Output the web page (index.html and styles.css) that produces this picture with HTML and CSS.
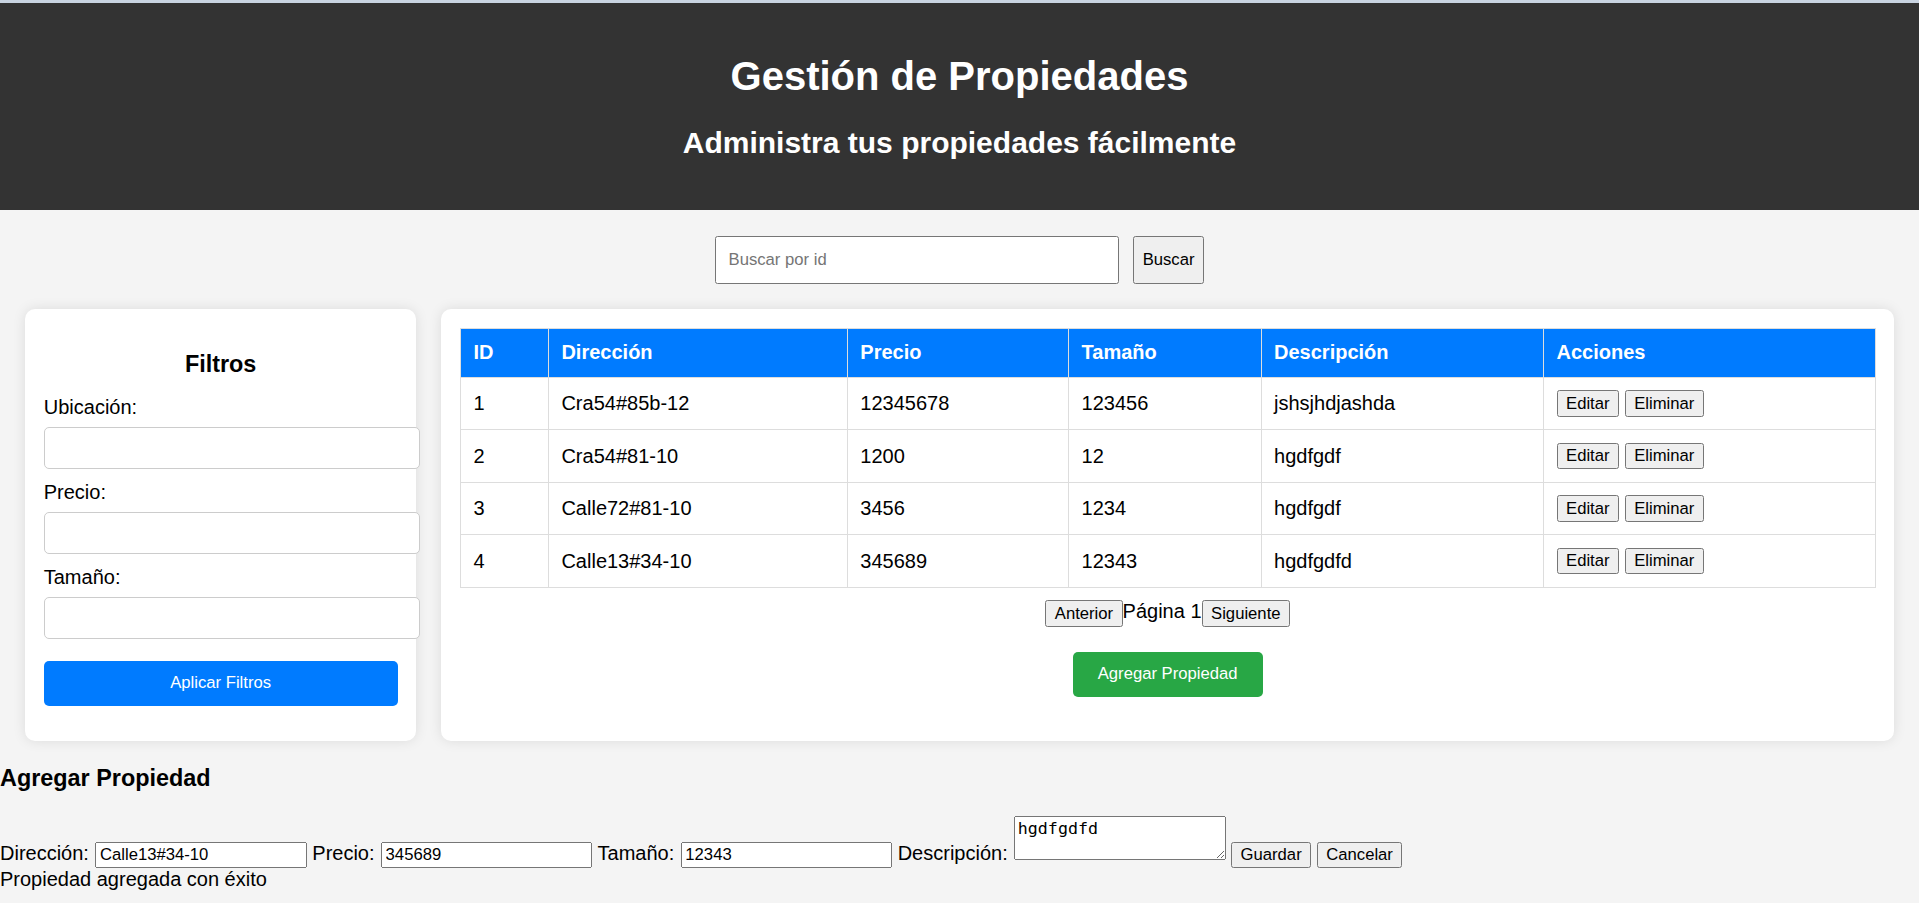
FILE: index.html
```
<!DOCTYPE html>
<html lang="es">
<head>
<meta charset="utf-8">
<title>Gestión de Propiedades</title>
<link rel="stylesheet" href="styles.css">
</head>
<body>
<div class="topbar"></div>
<header class="site-header">
  <h1 class="title">Gestión de Propiedades</h1>
  <h2 class="subtitle">Administra tus propiedades fácilmente</h2>
</header>
<div class="search">
  <input class="search-input" type="text" placeholder="Buscar por id">
  <button class="search-btn">Buscar</button>
</div>
<div class="layout">
  <aside class="card filters">
    <h3 class="filters-title">Filtros</h3>
    <label class="f-label">Ubicación:</label>
    <input class="f-input" type="text">
    <label class="f-label">Precio:</label>
    <input class="f-input" type="text">
    <label class="f-label">Tamaño:</label>
    <input class="f-input" type="text">
    <button class="apply-btn">Aplicar Filtros</button>
  </aside>
  <main class="card content">
    <table class="props">
      <colgroup>
        <col class="c-id"><col class="c-dir"><col class="c-precio"><col class="c-tam"><col class="c-desc"><col class="c-acc">
      </colgroup>
      <thead>
        <tr><th>ID</th><th>Dirección</th><th>Precio</th><th>Tamaño</th><th>Descripción</th><th>Acciones</th></tr>
      </thead>
      <tbody>
        <tr><td>1</td><td>Cra54#85b-12</td><td>12345678</td><td>123456</td><td>jshsjhdjashda</td><td><button class="row-btn">Editar</button> <button class="row-btn">Eliminar</button></td></tr>
        <tr><td>2</td><td>Cra54#81-10</td><td>1200</td><td>12</td><td>hgdfgdf</td><td><button class="row-btn">Editar</button> <button class="row-btn">Eliminar</button></td></tr>
        <tr><td>3</td><td>Calle72#81-10</td><td>3456</td><td>1234</td><td>hgdfgdf</td><td><button class="row-btn">Editar</button> <button class="row-btn">Eliminar</button></td></tr>
        <tr><td>4</td><td>Calle13#34-10</td><td>345689</td><td>12343</td><td>hgdfgdfd</td><td><button class="row-btn">Editar</button> <button class="row-btn">Eliminar</button></td></tr>
      </tbody>
    </table>
    <div class="pagination"><button class="pg-btn">Anterior</button><span class="pg-text">Página 1</span><button class="pg-btn">Siguiente</button></div>
    <button class="add-btn">Agregar Propiedad</button>
  </main>
</div>
<section class="add-section">
  <h3 class="add-title">Agregar Propiedad</h3>
  <form class="add-form">
    <label class="a-label">Dirección:</label> <input class="a-input" type="text" value="Calle13#34-10"> <label class="a-label">Precio:</label> <input class="a-input" type="text" value="345689"> <label class="a-label">Tamaño:</label> <input class="a-input" type="text" value="12343"> <label class="a-label">Descripción:</label> <textarea class="a-text">hgdfgdfd</textarea> <button class="a-btn" type="button">Guardar</button> <button class="a-btn" type="button">Cancelar</button>
  </form>
  <div class="msg">Propiedad agregada con éxito</div>
</section>
</body>
</html>
```
FILE: styles.css
```
html {
  zoom: 1.25;
}

body {
  margin: 0;
  background: #f4f4f4;
  font-family: "Liberation Sans", Arial, sans-serif;
  font-size: 16px;
  color: #000;
}

button, input {
  font-family: "Liberation Sans", Arial, sans-serif;
  font-size: 13.33px;
}

.topbar {
  height: 2.4px;
  background: #c9d4e1;
}

.site-header {
  background: #333;
  color: #fff;
  text-align: center;
  padding: 20px 0;
}

.title {
  font-size: 32px;
  font-weight: bold;
  margin: 20.5px 0 22px;
}

.subtitle {
  font-size: 24px;
  font-weight: bold;
  margin: 0 0 19.7px;
}

.search {
  display: flex;
  justify-content: center;
  gap: 11px;
  margin: 20.6px 0 20.4px;
}

.search-input {
  box-sizing: border-box;
  width: 323.5px;
  height: 38.4px;
  padding: 10px;
  border: 1px solid #767676;
  border-radius: 2px;
  background: #fff;
}

.layout {
  display: flex;
  gap: 20px;
  margin: 0 20px;
}

.card {
  background: #fff;
  border-radius: 8px;
  box-shadow: 0 0 10px rgba(0, 0, 0, 0.1);
  padding: 15px;
  min-width: 0;
}

.filters {
  flex: 1 1 0;
}

.content {
  flex: 4 1 0;
}

.filters-title {
  font-size: 18.72px;
  text-align: center;
  margin: 18.72px 0 14.3px;
}

.f-label {
  display: block;
  margin-bottom: 6.4px;
}

.f-input {
  display: block;
  width: 100%;
  padding: 8px;
  border: 1px solid #ccc;
  border-radius: 4px;
  margin: 0 0 9.4px;
  background: #fff;
}

.apply-btn {
  display: block;
  width: 100%;
  margin-top: 17.7px;
  padding: 10px;
  background: #007bff;
  color: #fff;
  border: none;
  border-radius: 4px;
}

.props {
  width: 100%;
  border-collapse: collapse;
  table-layout: fixed;
}

.c-id { width: 70.3px; }
.c-dir { width: 239.1px; }
.c-precio { width: 177px; }
.c-tam { width: 154px; }
.c-desc { width: 226px; }
.c-acc { width: 265.7px; }

.props th,
.props td {
  border: 1px solid #ddd;
  padding: 10px;
  text-align: left;
}

.props th {
  background: #007bff;
  color: #fff;
  font-weight: bold;
}

.pagination {
  margin-top: 10px;
  text-align: center;
}

.add-btn {
  display: block;
  margin: 20px auto;
  padding: 10px 20px;
  background: #28a745;
  color: #fff;
  border: none;
  border-radius: 4px;
}

.add-title {
  font-size: 18.72px;
  font-weight: bold;
  margin: 19.4px 0 19.3px;
}

.add-form {
  margin: 0;
}

.a-label {
  margin-right: 0.8px;
}

.a-input {
  box-sizing: border-box;
  width: 169px;
  height: 21px;
}

.a-text {
  box-sizing: border-box;
  width: 169px;
  height: 35.2px;
  font-family: "DejaVu Sans Mono", monospace;
  font-size: 13.33px;
}
```
